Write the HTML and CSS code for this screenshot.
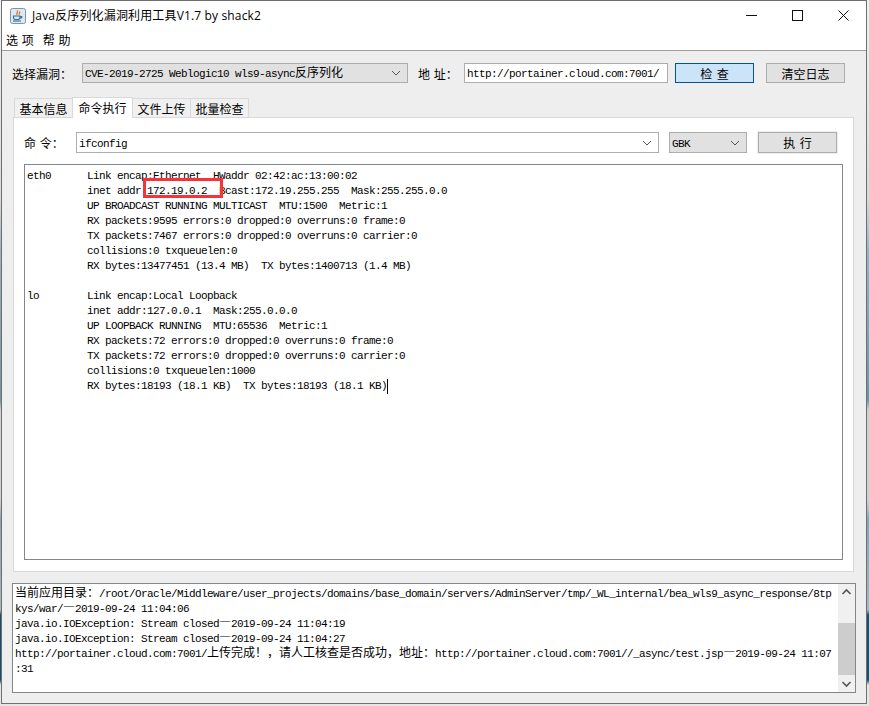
FILE: index.html
```html
<!DOCTYPE html>
<html lang="zh-CN">
<head>
<meta charset="utf-8">
<title>Java反序列化漏洞利用工具V1.7 by shack2</title>
<link rel="stylesheet" href="styles.css">
</head>
<body>
<div class="window">
  <header class="titlebar">
    <svg class="app-icon" width="16" height="16" viewBox="0 0 16 16">
      <rect x="0.5" y="0.5" width="15" height="15" rx="2" fill="#dfe7ef" stroke="#7f93a8"/>
      <path d="M7 2.5c2 1.500-1.500 2.500 0 4.500M9.500 3.500c1 1.200-1 2-.2 3.300" fill="none" stroke="#e2711d" stroke-width="1.200"/>
      <path d="M3.500 8h6.500v1.600c0 1.200-1 1.900-2 1.900H5.500c-1 0-2-.7-2-1.900zM10 8.500h1.500c.8 0 .8 1.800-1.500 1.800" fill="none" stroke="#2f6ea5" stroke-width="1.100"/>
      <path d="M3 13h8" stroke="#2f6ea5" stroke-width="1.100"/>
    </svg>
    <span class="title">Java反序列化漏洞利用工具V1.7 by shack2</span>
    <div class="controls">
      <span class="control"><svg width="11" height="11" viewBox="0 0 11 11"><path d="M0 5.500h11" stroke="#111" fill="none"/></svg></span>
      <span class="control"><svg width="11" height="11" viewBox="0 0 11 11"><rect x="0.500" y="0.500" width="10" height="10" fill="none" stroke="#111"/></svg></span>
      <span class="control"><svg width="11" height="11" viewBox="0 0 11 11"><path d="M0.500 0.500l10 10M10.500 0.500l-10 10" stroke="#111" fill="none"/></svg></span>
    </div>
  </header>
  <nav class="menubar">
    <span class="menu-item">选 项</span>
    <span class="menu-item">帮 助</span>
  </nav>
  <main class="content">
    <div class="toprow">
      <label class="label label-vuln">选择漏洞&#xFF1A;</label>
      <div class="combo combo-vuln">
        <span class="mono">CVE-2019-2725 Weblogic10 wls9-async<span class="zh">反序列化</span></span>
        <svg class="chev" width="10" height="6" viewBox="0 0 10 6"><path d="M1 1l4 4 4-4" fill="none" stroke="#555"/></svg>
      </div>
      <label class="label label-addr">地 址&#xFF1A;</label>
      <div class="field field-addr"><span class="mono">http://portainer.cloud.com:7001/</span></div>
      <button class="btn btn-focus">检 查</button>
      <button class="btn btn-clear">清空日志</button>
    </div>
    <div class="tabs">
      <span class="tab">基本信息</span>
      <span class="tab tab-active">命令执行</span>
      <span class="tab">文件上传</span>
      <span class="tab">批量检查</span>
    </div>
    <section class="panel">
      <div class="cmdrow">
        <label class="label label-cmd">命 令&#xFF1A;</label>
        <div class="combo combo-cmd">
          <span class="mono">ifconfig</span>
          <svg class="chev" width="10" height="6" viewBox="0 0 10 6"><path d="M1 1l4 4 4-4" fill="none" stroke="#555"/></svg>
        </div>
        <div class="combo combo-enc">
          <span class="mono">GBK</span>
          <svg class="chev" width="10" height="6" viewBox="0 0 10 6"><path d="M1 1l4 4 4-4" fill="none" stroke="#555"/></svg>
        </div>
        <button class="btn btn-run">执 行</button>
      </div>
      <div class="output">
<pre class="mono output-text">eth0      Link encap:Ethernet  HWaddr 02:42:ac:13:00:02
          inet addr:172.19.0.2  Bcast:172.19.255.255  Mask:255.255.0.0
          UP BROADCAST RUNNING MULTICAST  MTU:1500  Metric:1
          RX packets:9595 errors:0 dropped:0 overruns:0 frame:0
          TX packets:7467 errors:0 dropped:0 overruns:0 carrier:0
          collisions:0 txqueuelen:0
          RX bytes:13477451 (13.4 MB)  TX bytes:1400713 (1.4 MB)

lo        Link encap:Local Loopback
          inet addr:127.0.0.1  Mask:255.0.0.0
          UP LOOPBACK RUNNING  MTU:65536  Metric:1
          RX packets:72 errors:0 dropped:0 overruns:0 frame:0
          TX packets:72 errors:0 dropped:0 overruns:0 carrier:0
          collisions:0 txqueuelen:1000
          RX bytes:18193 (18.1 KB)  TX bytes:18193 (18.1 KB)<span class="caret"></span></pre>
        <div class="highlight"></div>
      </div>
    </section>
    <section class="log">
<pre class="mono log-text"><span class="zh">当前应用目录&#xFF1A;</span>/root/Oracle/Middleware/user_projects/domains/base_domain/servers/AdminServer/tmp/_WL_internal/bea_wls9_async_response/8tp
kys/war/<span class="zh">&#x2014;</span>2019-09-24 11:04:06
java.io.IOException: Stream closed<span class="zh">&#x2014;</span>2019-09-24 11:04:19
java.io.IOException: Stream closed<span class="zh">&#x2014;</span>2019-09-24 11:04:27
http://portainer.cloud.com:7001/<span class="zh">上传完成&#xFF01;&#xFF0C;请人工核查是否成功&#xFF0C;地址&#xFF1A;</span>http://portainer.cloud.com:7001//_async/test.jsp<span class="zh">&#x2014;</span>2019-09-24 11:07
:31</pre>
      <div class="scrollbar">
        <svg class="arrow" width="17" height="17" viewBox="0 0 17 17"><path d="M4.500 10l4-4 4 4" fill="none" stroke="#555" stroke-width="1.600"/></svg>
        <div class="track"><div class="thumb"></div></div>
        <svg class="arrow" width="17" height="17" viewBox="0 0 17 17"><path d="M4.500 7l4 4 4-4" fill="none" stroke="#555" stroke-width="1.600"/></svg>
      </div>
    </section>
  </main>
</div>
</body>
</html>
```
FILE: styles.css
```css
* { box-sizing: border-box; }
html, body { margin: 0; padding: 0; }
body {
  width: 869px;
  height: 706px;
  overflow: hidden;
  background: linear-gradient(180deg, #f2f2f2 0, #d8d8d8 200px, #9db3c2 250px, #6f93ab 400px, #d0d0d0 410px, #d0d0d0 500px, #8aa4b5 520px, #a9b7c0 610px, #14506f 615px, #14506f 680px, #e6e6e6 685px);
  font-family: "Open Sans", "Noto Sans CJK SC", sans-serif;
  font-size: 12px;
  color: #000;
}
.window {
  width: 866px;
  height: 704px;
  margin-left: 1px;
  border: 1px solid #6f6f6f;
  background: #eeeeee;
  display: flex;
  flex-direction: column;
}
.titlebar {
  height: 29px;
  background: #fff;
  display: flex;
  align-items: center;
  flex: none;
}
.app-icon { margin-left: 8px; flex: none; }
.title { margin-left: 6px; font-size: 12px; line-height: 29px; letter-spacing: 0.15px; }
.controls { margin-left: auto; display: flex; height: 100%; }
.control { width: 46px; display: flex; align-items: center; justify-content: center; }
.menubar {
  height: 21px;
  background: #fff;
  border-bottom: 1px solid #a0a0a0;
  padding-left: 4px;
  display: flex;
  gap: 9px;
  align-items: center;
  flex: none;
}
.menu-item { word-spacing: 1px; line-height: 20px; font-family: "Noto Sans CJK SC", sans-serif; }
.content { padding: 12px 0 0 10px; flex: 1; }
.toprow { display: flex; align-items: center; height: 20px; }
.label { font-family: "Noto Sans CJK SC", sans-serif; word-spacing: 1px; flex: none; white-space: nowrap; }
.label-vuln { width: 70px; }
.label-addr { width: 46px; margin-left: 10px; }
.label-cmd { width: 52px; }
.mono {
  font-family: "Liberation Mono", "Noto Sans CJK SC", monospace;
  font-size: 11px;
  letter-spacing: -0.6px;
}
.zh {
  font-family: "Noto Sans CJK SC", sans-serif;
  font-size: 12px;
  line-height: 0;
  letter-spacing: 0;
}
.combo {
  display: flex;
  align-items: center;
  justify-content: space-between;
  border: 1px solid #adadad;
  padding: 0 6px 0 2px;
  white-space: nowrap;
  flex: none;
}
.combo .mono, .field .mono { padding-top: 2px; }
.combo-vuln { width: 326px; height: 20px; background: #e1e1e1; }
.combo-cmd { width: 583px; height: 21px; background: #fff; }
.combo-enc { width: 78px; height: 21px; margin-left: 10px; background: #e1e1e1; }
.field {
  width: 204px;
  height: 20px;
  background: #fff;
  border: 1px solid #adadad;
  padding-left: 2px;
  display: flex;
  align-items: center;
  flex: none;
  white-space: nowrap;
  overflow: hidden;
}
.btn {
  height: 20px;
  width: 79px;
  padding: 0;
  border: 1px solid #adadad;
  background: #e1e1e1;
  font-family: "Noto Sans CJK SC", sans-serif;
  font-size: 12px;
  color: #000;
  word-spacing: 2px;
  flex: none;
}
.btn-focus { margin-left: 7px; background: #cce4f7; border-color: #005499; }
.btn-clear { margin-left: 12px; }
.btn-run { height: 21px; margin-left: 11px; box-shadow: 0 0 0 1px #eeeeee; }
.tabs {
  display: flex;
  align-items: flex-end;
  height: 20px;
  margin: 14px 0 0 2px;
  position: relative;
  z-index: 1;
}
.tab {
  width: 59px;
  height: 19px;
  line-height: 20px;
  text-align: center;
  border: 1px solid #d9d9d9;
  border-bottom: 0;
  margin-right: -1px;
  font-family: "Noto Sans CJK SC", sans-serif;
  background: #f0f0f0;
}
.tab-active {
  width: 61px;
  height: 21px;
  margin-bottom: -1px;
  background: #fff;
  line-height: 19px;
  position: relative;
}
.panel {
  width: 841px;
  height: 455px;
  margin-left: 1px;
  background: #fff;
  border: 1px solid #d9d9d9;
  padding: 14px 10px 0;
}
.cmdrow { display: flex; align-items: center; height: 21px; }
.output {
  position: relative;
  width: 819px;
  height: 396px;
  margin-top: 11px;
  border: 1px solid #82878c;
  background: #fff;
}
.output-text, .log-text { margin: 0; line-height: 15px; white-space: pre; }
.output-text { padding: 4px 0 0 2px; }
.caret {
  display: inline-block;
  width: 1px;
  height: 15px;
  background: #000;
  vertical-align: top;
}
.highlight {
  position: absolute;
  left: 118px;
  top: 13px;
  width: 80px;
  height: 20px;
  border: 3px solid #f5333a;
}
.log {
  position: relative;
  width: 844px;
  height: 110px;
  margin-top: 11px;
  border: 1px solid #82878c;
  background: #fff;
}
.log-text { padding: 3px 0 0 2px; }
.scrollbar {
  position: absolute;
  right: 0;
  top: 0;
  bottom: 0;
  width: 17px;
  background: #f0f0f0;
  display: flex;
  flex-direction: column;
}
.arrow { flex: none; }
.track { flex: 1; padding-top: 22px; }
.thumb { height: 52px; background: #cdcdcd; }
```
